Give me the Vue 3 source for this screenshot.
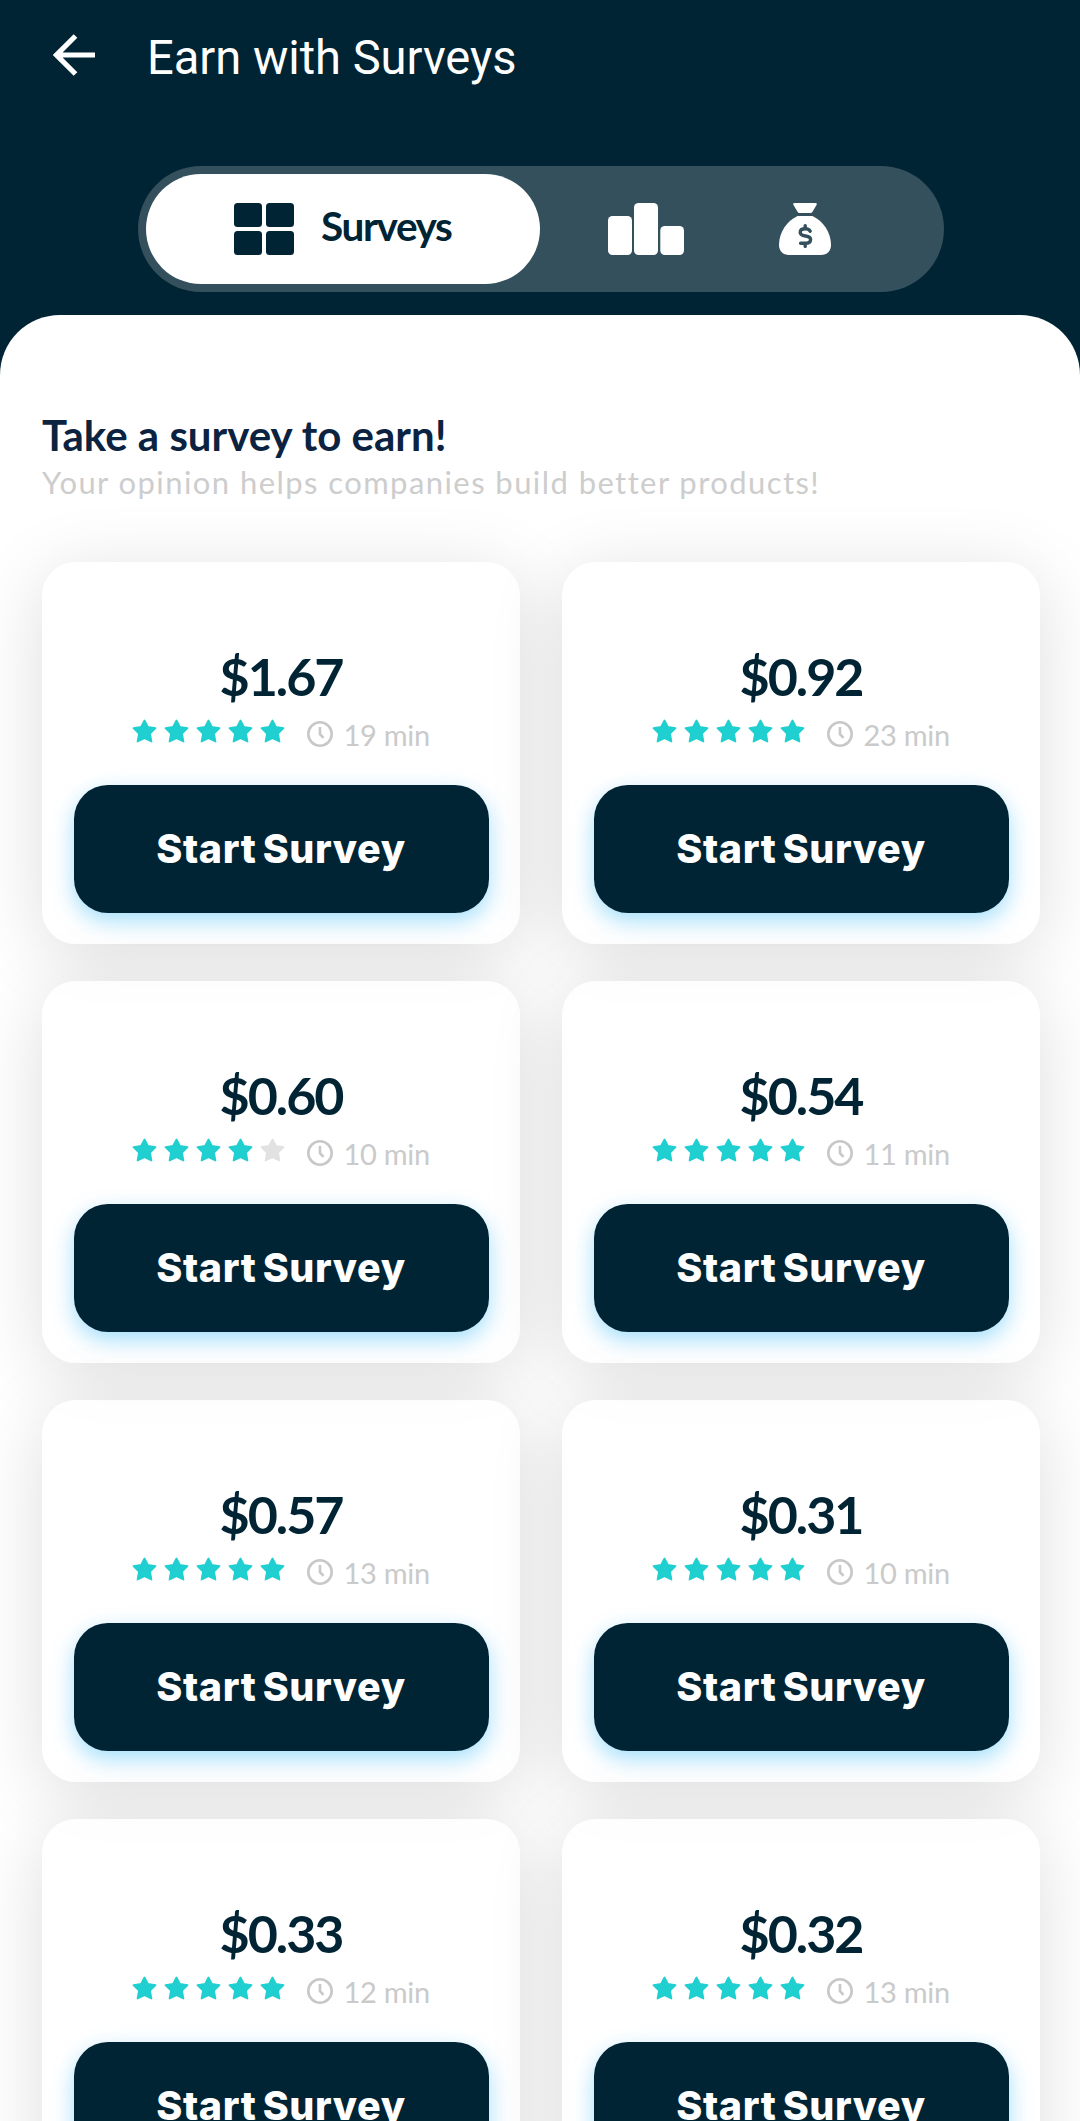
<script setup>
import { ref } from "vue"

const surveys = ref([
  { id: 1, price: "$1.67", stars: 5, time: 19 },
  { id: 2, price: "$0.92", stars: 5, time: 23 },
  { id: 3, price: "$0.60", stars: 4, time: 10 },
  { id: 4, price: "$0.54", stars: 5, time: 11 },
  { id: 5, price: "$0.57", stars: 5, time: 13 },
  { id: 6, price: "$0.31", stars: 5, time: 10 },
  { id: 7, price: "$0.33", stars: 5, time: 12 },
  { id: 8, price: "$0.32", stars: 5, time: 13 },
])
</script>
<template>
  <div class="screen">
    <header class="app-bar">
      <svg class="back" viewBox="0 0 42 42">
        <path d="M22.5 2 L3.5 21 L22.5 40 M3.5 21 H42" fill="none" stroke="#fff" stroke-width="5.2" />
      </svg>
      <h1 class="title">Earn with Surveys</h1>
    </header>

    <nav class="tabs">
      <button class="tab active">
        <svg class="icon-grid" viewBox="0 0 60 52">
          <rect x="0" y="0" width="28" height="24" rx="3.5" />
          <rect x="32" y="0" width="28" height="24" rx="3.5" />
          <rect x="0" y="28" width="28" height="24" rx="3.5" />
          <rect x="32" y="28" width="28" height="24" rx="3.5" />
        </svg>
        <span>Surveys</span>
      </button>
      <button class="tab tab-rank">
        <svg class="icon-rank" viewBox="0 0 76 52">
          <rect x="0" y="13" width="24" height="39" rx="4.5" />
          <rect x="26" y="0" width="24" height="52" rx="4.5" />
          <rect x="52.3" y="23" width="23.7" height="29" rx="4.5" />
        </svg>
      </button>
      <button class="tab tab-money">
        <svg class="icon-bag" viewBox="0 0 52 52">
          <path d="M15.5 0 H36.5 Q38.5 0 37.5 2 L33.5 8.7 Q32.8 10 31.5 10 H20.5 Q19.2 10 18.5 8.7 L14.5 2 Q13.5 0 15.5 0 Z" />
          <path d="M18.5 13 H33.5 C44 18 52 29 52 42 C52 48 48 52 42 52 H10 C4 52 0 48 0 42 C0 29 8 18 18.5 13 Z" />
          <path class="dollar" d="M31.2 28.3 C30.4 26.5 28.6 25.8 26.2 25.8 C23.2 25.8 21.2 27.2 21.2 29.4 C21.2 34.6 31.6 31.4 31.6 36.4 C31.6 38.9 29.2 40.2 26.2 40.2 H21.6 M26.2 22.6 V25.8 M26.2 40.2 V43.4" />
        </svg>
      </button>
    </nav>

    <main class="panel">
      <h2 class="heading">Take a survey to earn!</h2>
      <p class="sub">Your opinion helps companies build better products!</p>
      <div class="cards">
        <section v-for="s in surveys" :key="s.id" class="card">
          <div class="price">{{ s.price }}</div>
          <div class="meta">
            <div class="stars">
              <svg v-for="n in 5" :key="n" class="star" :class="{ off: n > s.stars }" viewBox="0 0 25 24">
                <path d="M12.5 1.5 L15.9 8 L23.5 9.2 L18 14.6 L19.4 22.5 L12.5 19.2 L5.6 22.5 L7 14.6 L1.5 9.2 L9.1 8 Z" />
              </svg>
            </div>
            <svg class="clock" viewBox="0 0 26 26">
              <circle cx="13" cy="13" r="11.7" />
              <path d="M13 6 V13.2 L16.5 16.8" />
            </svg>
            <span class="time">{{ s.time }} min</span>
          </div>
          <button class="start"><span>Start Survey</span></button>
        </section>
      </div>
    </main>
  </div>
</template>
<style>
body {
  margin: 0;
  background: #002434;
}
</style>
<style scoped>
.screen {
  width: 1080px;
  height: 2121px;
  overflow: hidden;
  background: #002434;
  font-family: Lato, "Open Sans", sans-serif;
}

button {
  border: none;
  padding: 0;
  background: none;
  font-family: inherit;
}

.app-bar {
  display: flex;
  align-items: center;
  height: 166px;
  box-sizing: border-box;
  padding: 0 53px 56px;
}

.back {
  width: 42px;
  height: 42px;
}

.title {
  margin: 6px 0 0 52px;
  font-family: Roboto, sans-serif;
  font-size: 48px;
  font-weight: 400;
  line-height: 60px;
  color: #fff;
  white-space: nowrap;
  transform: scaleX(0.98);
  transform-origin: left;
}

/* タブ */
.tabs {
  display: flex;
  align-items: center;
  width: 806px;
  height: 126px;
  box-sizing: border-box;
  margin-left: 138px;
  padding: 8px;
  border-radius: 63px;
  background: #34505d;
}

.tab {
  display: flex;
  align-items: center;
  height: 110px;
}

.tab svg {
  display: block;
  fill: #fff;
}

.tab.active {
  width: 394px;
  box-sizing: border-box;
  padding-left: 88px;
  gap: 27px;
  border-radius: 55px;
  background: #fff;
  color: #002434;
  font-size: 40.5px;
  font-weight: 700;
  line-height: 50px;
  letter-spacing: -1.4px;
}

.tab.active span {
  margin-top: -7px;
}

.tab.active svg {
  fill: #002434;
}

.icon-grid {
  width: 60px;
  height: 52px;
}

.tab-rank {
  margin-left: 68px;
}

.icon-rank {
  width: 76px;
  height: 52px;
}

.tab-money {
  margin-left: 95px;
}

.icon-bag {
  width: 52px;
  height: 52px;
}

.tab svg .dollar {
  fill: none;
  stroke: #34505d;
  stroke-width: 3.4;
  stroke-linecap: round;
}

/* 本体 */
.panel {
  margin-top: 23px;
  height: 1806px;
  box-sizing: border-box;
  padding: 95px 40px 0 42px;
  border-radius: 60px 60px 0 0;
  background: #fff;
}

.heading {
  margin: 0;
  font-size: 42px;
  font-weight: 700;
  line-height: 50px;
  letter-spacing: 0;
  color: #0b2340;
}

.sub {
  margin: 0;
  font-size: 31px;
  font-weight: 400;
  line-height: 44px;
  letter-spacing: 1.43px;
  color: #cdcdcd;
  white-space: nowrap;
}

.cards {
  display: grid;
  grid-template-columns: 478px 478px;
  gap: 37px 42px;
  margin-top: 58px;
}

/* 前の行の影がうっすら透ける */
.card {
  display: flex;
  flex-direction: column;
  align-items: center;
  height: 382px;
  box-sizing: border-box;
  padding-top: 84px;
  border-radius: 34px;
  background: rgba(255, 255, 255, 0.75);
  box-shadow: 0 12px 74px rgba(0, 0, 0, 0.135);
}

.price {
  font-size: 52px;
  font-weight: 700;
  line-height: 60px;
  letter-spacing: -2px;
  color: #002434;
}

.meta {
  display: flex;
  align-items: center;
  height: 34px;
  margin-top: 11px;
}

.stars {
  display: flex;
  gap: 7px;
  margin-top: -6px;
}

.star {
  width: 25px;
  height: 24px;
  fill: #20cfcf;
  stroke: #20cfcf;
  stroke-width: 1.8;
  stroke-linejoin: round;
}

.star.off {
  fill: #e2e2e2;
  stroke: #e2e2e2;
}

.clock {
  width: 26px;
  height: 26px;
  margin-left: 22px;
  fill: none;
  stroke: #c8c8c8;
  stroke-width: 2.6;
}

.time {
  width: 87px;
  margin-top: 2px;
  margin-left: 11px;
  font-size: 29px;
  font-weight: 400;
  line-height: 34px;
  letter-spacing: -0.3px;
  color: #cacaca;
  white-space: nowrap;
}

.start {
  width: 415px;
  height: 128px;
  margin-top: 34px;
  border-radius: 34px;
  background: #002434;
  box-shadow: 0 8px 22px rgba(0, 165, 245, 0.36);
  color: #fff;
  font-family: Inter, sans-serif;
  font-size: 39.5px;
  font-weight: 800;
  letter-spacing: 0.6px;
  word-spacing: -3px;
}
</style>
